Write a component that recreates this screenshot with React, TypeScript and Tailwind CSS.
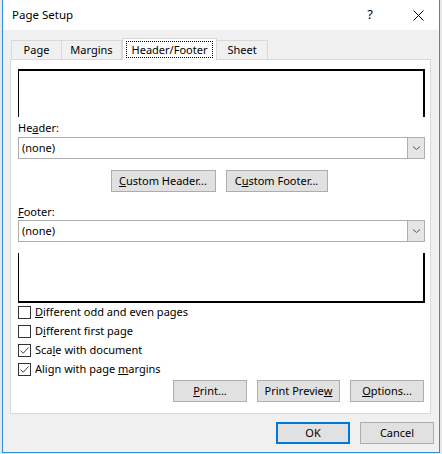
import React from "react";

const font = { fontFamily: '"Noto Sans", "Open Sans", sans-serif' };

function Btn({ children, w, primary }: { children: React.ReactNode; w: string; primary?: boolean }) {
  return (
    <div
      className={`${w} h-[22px] flex items-center justify-center bg-[#e1e1e1] text-[11px] text-black ${
        primary ? "border-2 border-[#0078d7]" : "border border-[#adadad]"
      }`}
    >
      {children}
    </div>
  );
}

function Select() {
  return (
    <div className="h-[22px] flex border border-[#adadad] bg-white">
      <div className="flex-1 flex items-center pl-[3px] text-[11px] text-black">(none)</div>
      <div className="w-[17px] bg-[#e5e5e5] border-l border-[#adadad] flex items-center justify-center">
        <svg width="9" height="6" viewBox="0 0 9 6">
          <path d="M1 1.5 L4.5 4.5 L8 1.5" stroke="#555" strokeWidth="1" fill="none" />
        </svg>
      </div>
    </div>
  );
}

function Check({ checked, children }: { checked?: boolean; children: React.ReactNode }) {
  return (
    <div className="h-[19px] flex items-center">
      <div className="w-[13px] h-[13px] border border-[#333] bg-white flex items-center justify-center">
        {checked && (
          <svg width="11" height="11" viewBox="0 0 11 11">
            <path d="M1.5 5.5 L4.2 8.3 L9.5 2.5" stroke="#444" strokeWidth="1" fill="none" />
          </svg>
        )}
      </div>
      <span className="ml-[4px] text-[11px] text-black">{children}</span>
    </div>
  );
}

export default function App() {
  return (
    <div className="w-[442px] h-[454px] bg-[#e8e8e8] overflow-hidden" style={font}>
      <div className="ml-[2px] w-[438px] h-[453px] bg-[#f0f0f0] border-x border-b border-[#2b8fdc] flex flex-col">
        {/* title bar */}
        <div className="h-[30px] bg-white flex items-center">
          <span className="ml-[9px] text-[11.5px] text-black">Page Setup</span>
          <span className="ml-auto mr-[40px] text-[13px] text-black">?</span>
          <svg className="mr-[15px]" width="11" height="11" viewBox="0 0 11 11">
            <path d="M0.5 0.5 L10.5 10.5 M10.5 0.5 L0.5 10.5" stroke="#000" strokeWidth="1" />
          </svg>
        </div>

        {/* tabs */}
        <div className="ml-[8px] mt-[8px] flex items-end h-[21px] relative z-10">
          <div className="w-[51px] h-[19px] border border-b-0 border-[#d9d9d9] flex items-center justify-center text-[11px] text-black">
            Page
          </div>
          <div className="w-[60px] h-[19px] border border-b-0 border-l-0 border-[#d9d9d9] flex items-center justify-center text-[11px] text-black">
            Margins
          </div>
          <div className="w-[95px] h-[22px] -mb-px bg-white border border-b-0 border-[#d9d9d9] flex items-center justify-center">
            <span className="px-[5px] border border-dotted border-black text-[11px] leading-[15px] text-black">
              Header/Footer
            </span>
          </div>
          <div className="w-[51px] h-[19px] border border-b-0 border-l-0 border-[#d9d9d9] flex items-center justify-center text-[11px] text-black">
            Sheet
          </div>
        </div>

        {/* panel */}
        <div className="ml-[7px] w-[421px] h-[355px] bg-white border border-[#d9d9d9] pl-[7px] pr-[5px] flex flex-col">
          <div className="mt-[9px] h-[48px] border-t-2 border-l border-r-2 border-black" />
          <div className="mt-[3px] text-[11px] text-black leading-[16px]">
            He<span className="underline">a</span>der:
          </div>
          <div className="mt-[1px]">
            <Select />
          </div>
          <div className="mt-[11px] flex justify-center gap-[10px] pr-[5px]">
            <Btn w="w-[105px]">
              <span className="underline">C</span>ustom Header...
            </Btn>
            <Btn w="w-[102px]">
              C<span className="underline">u</span>stom Footer...
            </Btn>
          </div>
          <div className="mt-[12px] text-[11px] text-black leading-[16px]">
            <span className="underline">F</span>ooter:
          </div>
          <div>
            <Select />
          </div>
          <div className="mt-[11px] h-[50px] border-l border-b-2 border-r-2 border-black" />
          <div className="flex flex-col">
            <Check>
              <span className="underline">D</span>ifferent odd and even pages
            </Check>
            <Check>
              D<span className="underline">i</span>fferent first page
            </Check>
            <Check checked>
              Sca<span className="underline">l</span>e with document
            </Check>
            <Check checked>
              Align with page <span className="underline">m</span>argins
            </Check>
          </div>
          <div className="mt-[1px] flex justify-end gap-[10px] pr-[1px]">
            <Btn w="w-[74px]">
              <span className="underline">P</span>rint...
            </Btn>
            <Btn w="w-[83px]">
              Print Previe<span className="underline">w</span>
            </Btn>
            <Btn w="w-[74px]">
              <span className="underline">O</span>ptions...
            </Btn>
          </div>
        </div>

        {/* bottom buttons */}
        <div className="mt-[8px] flex justify-end gap-[10px] pr-[5px]">
          <Btn w="w-[74px]" primary>
            OK
          </Btn>
          <Btn w="w-[74px]">Cancel</Btn>
        </div>
      </div>
    </div>
  );
}
